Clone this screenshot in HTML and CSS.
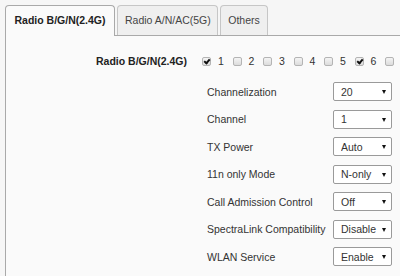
FILE: index.html
```html
<!DOCTYPE html>
<html lang="en">
<head>
    <meta charset="UTF-8">
    <meta name="viewport" content="width=device-width, initial-scale=1.0">
    <title>Radio Settings</title>
    <link rel="stylesheet" href="styles.css">
</head>
<body>
    <div class="page">
        <ul class="tabs">
            <li class="tab active">Radio B/G/N(2.4G)</li>
            <li class="tab">Radio A/N/AC(5G)</li>
            <li class="tab">Others</li>
        </ul>

        <div class="panel">
            <div class="radio-head">
                <div class="head-label">Radio B/G/N(2.4G)</div>
                <div class="ssid-list">
                    <label class="ssid"><input type="checkbox" checked><span>1</span></label>
                    <label class="ssid"><input type="checkbox"><span>2</span></label>
                    <label class="ssid"><input type="checkbox"><span>3</span></label>
                    <label class="ssid"><input type="checkbox"><span>4</span></label>
                    <label class="ssid"><input type="checkbox"><span>5</span></label>
                    <label class="ssid"><input type="checkbox" checked><span>6</span></label>
                    <label class="ssid"><input type="checkbox"></label>
                </div>
            </div>

            <div class="settings">
                <div class="row">
                    <span class="row-label">Channelization</span>
                    <div class="select"><select><option>20</option><option>40</option></select></div>
                </div>
                <div class="row">
                    <span class="row-label">Channel</span>
                    <div class="select"><select><option>1</option><option>6</option><option>11</option></select></div>
                </div>
                <div class="row">
                    <span class="row-label">TX Power</span>
                    <div class="select"><select><option>Auto</option><option>High</option></select></div>
                </div>
                <div class="row">
                    <span class="row-label">11n only Mode</span>
                    <div class="select"><select><option>N-only</option><option>Off</option></select></div>
                </div>
                <div class="row">
                    <span class="row-label">Call Admission Control</span>
                    <div class="select"><select><option>Off</option><option>On</option></select></div>
                </div>
                <div class="row">
                    <span class="row-label">SpectraLink Compatibility</span>
                    <div class="select"><select><option>Disable</option><option>Enable</option></select></div>
                </div>
                <div class="row">
                    <span class="row-label">WLAN Service</span>
                    <div class="select"><select><option>Enable</option><option>Disable</option></select></div>
                </div>
            </div>
        </div>
    </div>
</body>
</html>
```

FILE: styles.css
```css
:root {
    --text-color: #333;
    --border-color: #a9a9a9;
    --tab-border: #c6c6c6;
    --panel-bg: #fafafa;
}

* {
    margin: 0;
    padding: 0;
    box-sizing: border-box;
}

body {
    font-family: "Liberation Sans", Arial, sans-serif;
    font-size: 10.5px;
    color: var(--text-color);
    background-color: #f6f6f6;
    overflow: hidden;
}

.page {
    height: 276px;
    padding: 5px 0 0 5px;
    display: flex;
    flex-direction: column;
}

/* tabs */
.tabs {
    display: flex;
    gap: 2px;
    list-style: none;
    height: 30px;
    flex-shrink: 0;
}

.tab {
    height: 30px;
    line-height: 28px;
    padding: 0 7px;
    border: 1px solid var(--tab-border);
    border-bottom: none;
    border-radius: 4px 4px 0 0;
    background-color: #efefef;
    color: #444;
    white-space: nowrap;
}

.tab.active {
    width: 110px;
    height: 31px;
    margin-bottom: -1px;
    border-color: var(--border-color);
    background-color: var(--panel-bg);
    font-weight: bold;
    color: #222;
    text-align: center;
    position: relative;
    z-index: 1;
}

.tab:nth-child(2) {
    width: 101px;
    text-align: center;
}

.tab:nth-child(3) {
    width: 48px;
    text-align: center;
}

/* panel */
.panel {
    flex: 1;
    border-top: 1px solid var(--border-color);
    border-left: 1px solid var(--border-color);
    background-color: var(--panel-bg);
    padding-top: 15px;
    overflow: hidden;
}

.radio-head {
    display: flex;
    align-items: center;
    height: 20px;
    margin-bottom: 7px;
}

.head-label {
    flex-shrink: 0;
    width: 181px;
    text-align: right;
    font-weight: bold;
    color: #222;
    margin-right: 15px;
    white-space: nowrap;
}

.ssid-list {
    display: flex;
    flex-shrink: 0;
}

.ssid {
    display: flex;
    align-items: center;
    gap: 7px;
    width: 30.5px;
    flex-shrink: 0;
}

.ssid input {
    appearance: none;
    -webkit-appearance: none;
    width: 9px;
    height: 9px;
    border: 1px solid #b4b4b4;
    border-radius: 2px;
    background: linear-gradient(#f4f4f4, #dcdcdc);
    position: relative;
    flex-shrink: 0;
}

.ssid input:checked::after {
    content: "";
    position: absolute;
    left: 2px;
    top: 0px;
    width: 2px;
    height: 4px;
    border: solid #111;
    border-width: 0 2px 2px 0;
    transform: rotate(40deg);
}

/* settings rows */
.settings {
    padding-left: 201px;
}

.row {
    display: flex;
    align-items: center;
    height: 27.5px;
}

.row-label {
    width: 126px;
    white-space: nowrap;
}

.select {
    position: relative;
    width: 59px;
    height: 19px;
}

.select select {
    appearance: none;
    -webkit-appearance: none;
    width: 100%;
    height: 100%;
    padding: 0 0 0 7px;
    border: 1px solid #9a9a9a;
    border-radius: 2px;
    background-color: #fff;
    font-family: inherit;
    font-size: 10.5px;
    color: var(--text-color);
}

.select::after {
    content: "";
    position: absolute;
    right: 6px;
    top: 8px;
    border-left: 2.5px solid transparent;
    border-right: 2.5px solid transparent;
    border-top: 4px solid #111;
    pointer-events: none;
}
```
